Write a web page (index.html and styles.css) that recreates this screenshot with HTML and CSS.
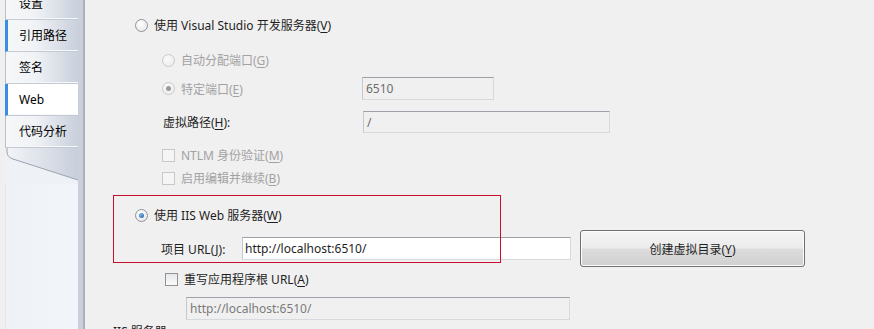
FILE: index.html
```html
<!DOCTYPE html>
<html lang="zh-cn">
<head>
    <meta charset="UTF-8">
    <title>Web</title>
    <link rel="stylesheet" href="styles.css">
</head>
<body>
    <div class="janela">
        <div class="lateral">
            <div class="abas">
                <div class="aba">设置</div>
                <div class="aba marcada">引用路径</div>
                <div class="aba">签名</div>
                <div class="aba ativa">Web</div>
                <div class="aba">代码分析</div>
            </div>
            <svg class="dobra" width="73" height="36" viewBox="0 0 73 36">
                <defs>
                    <linearGradient id="g1" x1="0" x2="1" y1="0" y2="0">
                        <stop offset="0" stop-color="#f3f5f8"/>
                        <stop offset="1" stop-color="#c8cfdb"/>
                    </linearGradient>
                </defs>
                <rect x="0" y="0" width="73" height="36" fill="#eef2f7"/>
                <path d="M0 0 H73 V32 L8 11 Q2 9 2 4 V0 Z" fill="url(#g1)"/>
                <path d="M2 0 V4 Q2 9 8 11 L73 32" fill="none" stroke="#9aa3b0" stroke-width="1"/>
            </svg>
            <div class="resto"></div>
        </div>

        <div class="conteudo">
            <div class="linha opcao">
                <span class="radio"></span>
                <span>使用 Visual Studio 开发服务器(<u>V</u>)</span>
            </div>

            <div class="grupo">
                <div class="linha opcao desligado auto">
                    <span class="radio"></span>
                    <span>自动分配端口(<u>G</u>)</span>
                </div>
                <div class="campo porta">
                    <div class="rotulo opcao desligado">
                        <span class="radio marcado"></span>
                        <span>特定端口(<u>E</u>)</span>
                    </div>
                    <div class="caixa curta">6510</div>
                </div>
                <div class="campo caminho">
                    <div class="rotulo texto">虚拟路径(<u>H</u>):</div>
                    <div class="caixa longa">/</div>
                </div>
                <div class="linha opcao desligado ntlm">
                    <span class="check"></span>
                    <span>NTLM 身份验证(<u>M</u>)</span>
                </div>
                <div class="linha opcao desligado editar">
                    <span class="check"></span>
                    <span>启用编辑并继续(<u>B</u>)</span>
                </div>
            </div>

            <div class="linha opcao iis">
                <span class="radio marcado azul"></span>
                <span>使用 IIS Web 服务器(<u>W</u>)</span>
            </div>
            <div class="url">
                <span class="texto">项目 URL(<u>J</u>):</span>
                <div class="caixa branca">http://localhost:6510/</div>
                <button class="botao">创建虚拟目录(<u>Y</u>)</button>
            </div>
            <div class="linha opcao reescrever">
                <span class="check ativo"></span>
                <span>重写应用程序根 URL(<u>A</u>)</span>
            </div>
            <div class="caixa raiz">http://localhost:6510/</div>
            <div class="cortado">IIS 服务器</div>

            <!-- moldura vermelha por cima da captura -->
            <div class="destaque"></div>
        </div>
    </div>
</body>
</html>
```

FILE: styles.css
```css
body {
    margin: 0;
    padding: 0;
    background-color: #f0f0f0;
    font-family: "Noto Sans", "Noto Sans CJK SC", sans-serif;
    font-size: 12px;
    color: #1e1e1e;
    overflow: hidden;
}

u {
    text-decoration: underline;
    text-underline-offset: 2px;
}

.janela {
    display: flex;
    height: 329px;
}

/* barra lateral com as abas */
.lateral {
    width: 78px;
    padding-left: 5px;
    display: flex;
    flex-direction: column;
    border-right: 2px solid #a9b1bf;
    box-shadow: inset -5px 0 0 #c9d0db;
    overflow: hidden;
}

.abas {
    margin-top: -12px;
    width: 73px;
}

.aba {
    height: 31px;
    line-height: 31px;
    padding-left: 13px;
    color: #000;
    background: linear-gradient(to right, #f6f7f9, #f0f2f5 40%, #c9d0dc);
    border-left: 1px solid #b9c0cb;
    border-bottom: 1px solid #c3c9d3;
    box-shadow: inset 0 -1px 0 #f7f8fa;
}

.aba.marcada {
    border-left: 3px solid #3b8fe3;
    padding-left: 11px;
}

.aba.ativa {
    background: #ffffff;
    border-left: 3px solid #3b8fe3;
    padding-left: 11px;
}

.dobra {
    display: block;
}

.resto {
    flex: 1;
    width: 72px;
    background: linear-gradient(to right, #eef2f7, #f2f5f9);
    border-left: 1px solid #e3e7ed;
}

/* area principal */
.conteudo {
    position: relative;
    flex: 1;
    padding-left: 50px;
    padding-top: 16px;
}

.linha {
    display: flex;
    align-items: center;
    height: 18px;
}

.opcao {
    display: flex;
    align-items: center;
    gap: 6px;
}

.desligado {
    color: #a2a2a2;
}

.radio {
    width: 11px;
    height: 11px;
    border-radius: 50%;
    border: 1px solid #8f9398;
    background: radial-gradient(circle at 40% 35%, #ffffff, #e2e3e5);
    box-sizing: content-box;
    display: flex;
    align-items: center;
    justify-content: center;
}

.desligado .radio {
    border-color: #c9cacc;
    background: radial-gradient(circle at 40% 35%, #fafafa, #eaeaea);
}

.radio.marcado::after {
    content: "";
    width: 5px;
    height: 5px;
    border-radius: 50%;
    background: #9a9a9a;
}

.radio.azul::after {
    background: radial-gradient(circle at 40% 35%, #7ab4ea, #1c5a9a);
}

.check {
    width: 11px;
    height: 11px;
    border: 1px solid #c7c8ca;
    background: #f5f5f5;
}

.check.ativo {
    border-color: #8f9398;
    background: linear-gradient(#e6e7e8, #fbfbfb);
}

.grupo {
    padding-left: 27px;
}

.auto {
    margin-top: 17px;
}

.campo {
    display: flex;
    align-items: center;
}

.rotulo {
    width: 200px;
}

.porta {
    margin-top: 8px;
    height: 23px;
}

.caminho {
    margin-top: 11px;
    height: 22px;
}

.texto {
    padding-left: 1px;
    color: #1e1e1e;
}

.caixa {
    box-sizing: border-box;
    height: 23px;
    line-height: 21px;
    padding-left: 3px;
    border: 1px solid #abadb3;
    border-color: #9ea2a8 #d6d9de #d6d9de #c5c9ce;
    background: #f0f0f0;
    color: #6d6d6d;
}

.curta {
    width: 132px;
}

.longa {
    width: 247px;
    height: 22px;
}

.ntlm {
    margin-top: 13px;
}

.editar {
    margin-top: 5px;
}

.iis {
    margin-top: 19px;
}

.url {
    display: flex;
    align-items: center;
    margin-top: 6px;
    padding-left: 25px;
    height: 37px;
}

.url .texto {
    width: 81px;
}

.caixa.branca {
    width: 329px;
    background: #ffffff;
    color: #1e1e1e;
    padding-left: 2px;
}

.botao {
    margin-left: 9px;
    width: 225px;
    height: 37px;
    border: 1px solid #707070;
    border-radius: 3px;
    background: linear-gradient(#f4f4f4, #ececec 48%, #dcdcdc 52%, #d0d0d0);
    box-shadow: inset 0 0 0 1px #fcfcfc;
    font-family: inherit;
    font-size: 12px;
    color: #1e1e1e;
    padding: 0;
}

.reescrever {
    margin-top: 3px;
    padding-left: 30px;
}

.caixa.raiz {
    margin-top: 9px;
    margin-left: 51px;
    width: 384px;
    color: #7a7a7a;
}

.cortado {
    margin-top: 2px;
    margin-left: -22px;
    color: #1e1e1e;
}

.destaque {
    position: absolute;
    left: 28px;
    top: 195px;
    width: 386px;
    height: 66px;
    border: 1px solid #c8102e;
    pointer-events: none;
}
```
